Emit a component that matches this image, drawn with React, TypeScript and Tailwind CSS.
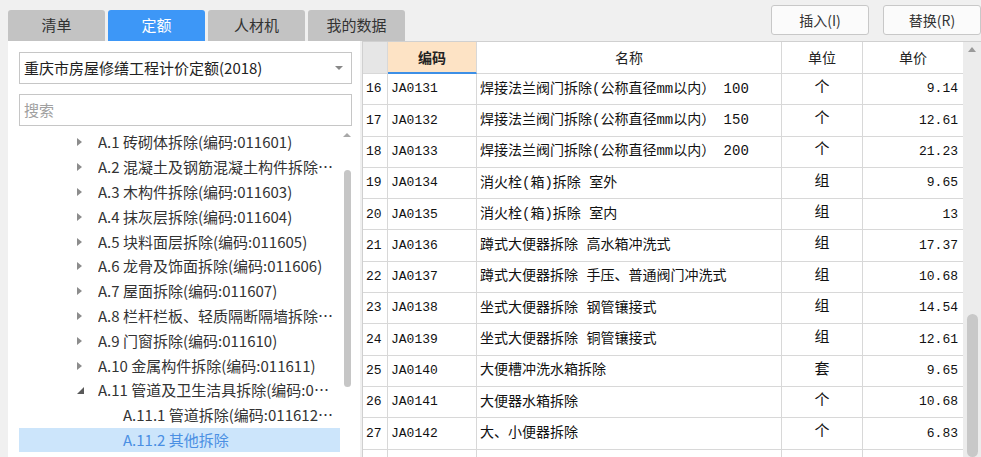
import React from 'react';

const cjk = '"Noto Sans CJK SC", "Noto Sans", sans-serif';
const mono = '"Liberation Mono", "Noto Sans CJK SC", monospace';

type TreeItem = { label: string; level: 0 | 1; state?: 'closed' | 'open'; active?: boolean };

const treeItems: TreeItem[] = [
  { label: 'A.1 砖砌体拆除(编码:011601)', level: 0, state: 'closed' },
  { label: 'A.2 混凝土及钢筋混凝土构件拆除(编码:011602)', level: 0, state: 'closed' },
  { label: 'A.3 木构件拆除(编码:011603)', level: 0, state: 'closed' },
  { label: 'A.4 抹灰层拆除(编码:011604)', level: 0, state: 'closed' },
  { label: 'A.5 块料面层拆除(编码:011605)', level: 0, state: 'closed' },
  { label: 'A.6 龙骨及饰面拆除(编码:011606)', level: 0, state: 'closed' },
  { label: 'A.7 屋面拆除(编码:011607)', level: 0, state: 'closed' },
  { label: 'A.8 栏杆栏板、轻质隔断隔墙拆除(编码:011608)', level: 0, state: 'closed' },
  { label: 'A.9 门窗拆除(编码:011610)', level: 0, state: 'closed' },
  { label: 'A.10 金属构件拆除(编码:011611)', level: 0, state: 'closed' },
  { label: 'A.11 管道及卫生洁具拆除(编码:011612)', level: 0, state: 'open' },
  { label: 'A.11.1 管道拆除(编码:011612001)', level: 1 },
  { label: 'A.11.2 其他拆除', level: 1, active: true },
];

const rows = [
  ['16', 'JA0131', '焊接法兰阀门拆除(公称直径mm以内） 100', '个', '9.14'],
  ['17', 'JA0132', '焊接法兰阀门拆除(公称直径mm以内） 150', '个', '12.61'],
  ['18', 'JA0133', '焊接法兰阀门拆除(公称直径mm以内） 200', '个', '21.23'],
  ['19', 'JA0134', '消火栓(箱)拆除 室外', '组', '9.65'],
  ['20', 'JA0135', '消火栓(箱)拆除 室内', '组', '13'],
  ['21', 'JA0136', '蹲式大便器拆除 高水箱冲洗式', '组', '17.37'],
  ['22', 'JA0137', '蹲式大便器拆除 手压、普通阀门冲洗式', '组', '10.68'],
  ['23', 'JA0138', '坐式大便器拆除 钢管镶接式', '组', '14.54'],
  ['24', 'JA0139', '坐式大便器拆除 铜管镶接式', '组', '12.61'],
  ['25', 'JA0140', '大便槽冲洗水箱拆除', '套', '9.65'],
  ['26', 'JA0141', '大便器水箱拆除', '个', '10.68'],
  ['27', 'JA0142', '大、小便器拆除', '个', '6.83'],
  ['', '', '', '', ''],
];

const tabs = ['清单', '定额', '人材机', '我的数据'];

const App: React.FC = () => {
  return (
    <div className="w-[981px] h-[457px] overflow-hidden bg-[#f0f0f0] flex flex-col" style={{ fontFamily: cjk }}>
      {/* Top bar: tabs + buttons */}
      <div className="h-[41px] flex shrink-0">
        <div className="flex gap-[3px] pl-[8px] pt-[10px]">
          {tabs.map((t, i) => (
            <div
              key={t}
              className={`w-[97px] h-[31px] rounded-t-[3px] flex items-center justify-center text-[15px] ${
                i === 1 ? 'bg-[#3d97f7] text-white' : 'bg-[#c3c3c3] text-[#333]'
              }`}
            >
              {t}
            </div>
          ))}
        </div>
        <div className="ml-auto flex gap-[14px] pt-[5px]">
          <button className="w-[98px] h-[30px] bg-[#fbfbfb] border border-[#c8c8c8] rounded-[3px] text-[14px] text-[#333]">
            插入(I)
          </button>
          <button className="w-[98px] h-[30px] bg-[#fbfbfb] border border-[#c8c8c8] rounded-[3px] text-[14px] text-[#333]">
            替换(R)
          </button>
        </div>
      </div>

      <div className="flex flex-1 min-h-0">
        {/* Left panel */}
        <div className="ml-[8px] w-[352px] bg-white pt-[11px] pl-[11px] flex flex-col">
          <div className="w-[333px] h-[32px] border border-[#c6c6c6] flex items-center pl-[4px] pr-[8px] text-[15px] text-[#222]">
            <span className="flex-1">重庆市房屋修缮工程计价定额(2018)</span>
            <span className="w-0 h-0 border-l-[4px] border-r-[4px] border-t-[4px] border-l-transparent border-r-transparent border-t-[#888]" />
          </div>
          <div className="w-[333px] h-[32px] mt-[10px] border border-[#c6c6c6] flex items-center pl-[4px] text-[15px] text-[#a0a0a0]">
            搜索
          </div>
          <div className="flex mt-[4px] flex-1 min-h-0">
            <div className="w-[321px] overflow-hidden">
              {treeItems.map((it) => (
                <div
                  key={it.label}
                  className={`h-[24.8px] flex items-center text-[15px] leading-[20px] ${
                    it.active ? 'bg-[#cce5fb] text-[#4a8fe3]' : 'text-[#333]'
                  }`}
                >
                  <div className="w-[79px] shrink-0 flex items-center pl-[58px]">
                    {it.state === 'closed' && (
                      <span className="w-0 h-0 border-t-[4px] border-b-[4px] border-l-[5px] border-t-transparent border-b-transparent border-l-[#8c8c8c]" />
                    )}
                    {it.state === 'open' && (
                      <svg width="7" height="7" viewBox="0 0 7 7">
                        <path d="M7 0 L7 7 L0 7 Z" fill="#5a5a5a" />
                      </svg>
                    )}
                  </div>
                  <span className={`truncate pr-[4px] ${it.level === 1 ? 'pl-[25px]' : ''}`}>{it.label}</span>
                </div>
              ))}
            </div>
            {/* left scrollbar */}
            <div className="ml-[3px] w-[8px] flex flex-col items-center">
              <span className="mt-[3px] w-0 h-0 border-l-[4px] border-r-[4px] border-b-[4px] border-l-transparent border-r-transparent border-b-[#a8a8a8]" />
              <div className="mt-[33px] w-[7px] h-[217px] rounded-full bg-[#c6c6c6]" />
            </div>
          </div>
        </div>

        {/* Table */}
        <div className="ml-[2px] w-[601px] bg-white border-l border-[#d0d0d0] border-t" style={{ fontFamily: mono }}>
          <div className="grid grid-cols-[25px_89px_305px_81px_101px] h-[32px] text-[14px]" style={{ fontFamily: cjk }}>
            <div className="bg-[#e6e6e6] border-r border-b border-[#d8d8d8]" />
            <div className="bg-[#fde3c5] border-r border-[#d8d8d8] border-b-2 border-b-[#3d8fe6] flex items-center justify-center font-bold text-[#222]">
              编码
            </div>
            <div className="border-r border-b border-[#d8d8d8] flex items-center justify-center text-[#222]">名称</div>
            <div className="border-r border-b border-[#d8d8d8] flex items-center justify-center text-[#222]">单位</div>
            <div className="border-r border-b border-[#d8d8d8] flex items-center justify-center text-[#222]">单价</div>
          </div>
          {rows.map((r, i) => (
            <div key={i} className="grid grid-cols-[25px_89px_305px_81px_101px] h-[31.3px] text-[13px] text-[#111]">
              <div className="border-r border-b border-[#d8d8d8] flex items-center pl-[3px]">{r[0]}</div>
              <div className="border-r border-b border-[#d8d8d8] flex items-center pl-[3px]">{r[1]}</div>
              <div className="border-r border-b border-[#d8d8d8] flex items-center pl-[3px] whitespace-nowrap text-[14px]">
                {r[2]}
              </div>
              <div className="border-r border-b border-[#d8d8d8] flex items-center justify-center text-[15px]">{r[3]}</div>
              <div className="border-r border-b border-[#d8d8d8] flex items-center justify-end pr-[5px]">{r[4]}</div>
            </div>
          ))}
        </div>

        {/* right scrollbar */}
        <div className="w-[18px] bg-[#ececec] flex flex-col items-center border-t border-[#d0d0d0]">
          <span className="mt-[5px] w-0 h-0 border-l-[4px] border-r-[4px] border-b-[5px] border-l-transparent border-r-transparent border-b-[#9a9a9a]" />
          <div className="mt-[262px] w-[11px] h-[160px] rounded-full bg-[#c8c8c8]" />
        </div>
      </div>
    </div>
  );
};

export default App;
